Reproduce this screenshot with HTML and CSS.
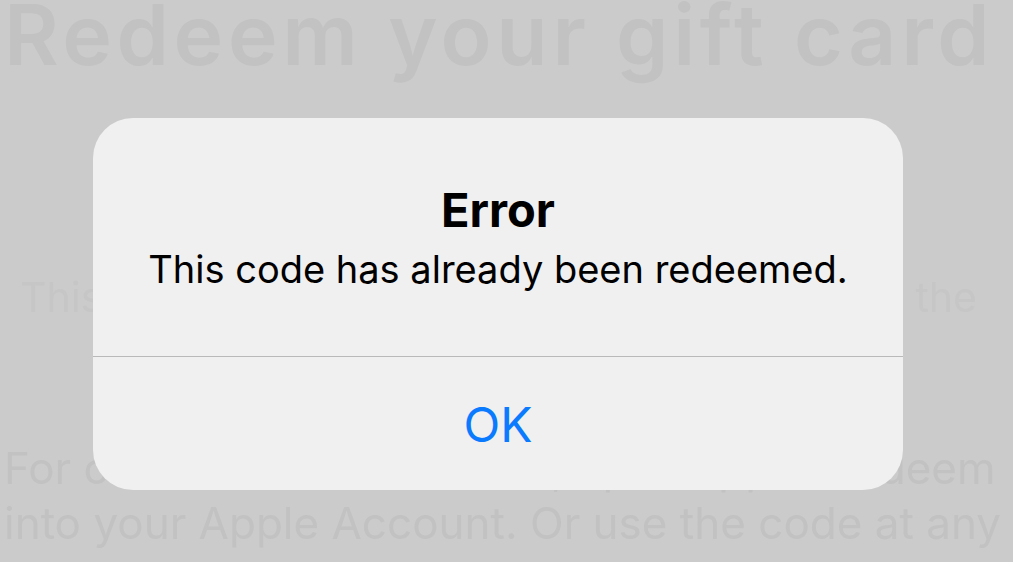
FILE: index.html
```html
<!DOCTYPE html>
<html lang="en">
<head>
<meta charset="utf-8">
<title>Error</title>
<link rel="stylesheet" href="styles.css">
</head>
<body>
<main class="screen">
  <section class="backdrop" aria-hidden="true">
    <h1 class="bg-title">Redeem your gift card</h1>
    <p class="bg-line bg-faint">This gift card can be redeemed on the</p>
    <p class="bg-text">For codes that start with X, open app to redeem<br>into your Apple Account. Or use the code at any</p>
  </section>
  <div class="alert" role="alertdialog" aria-labelledby="alert-title">
    <div class="alert-body">
      <h2 class="alert-title" id="alert-title">Error</h2>
      <p class="alert-message">This code has already been redeemed.</p>
    </div>
    <button class="alert-button" type="button">OK</button>
  </div>
</main>
</body>
</html>
```

FILE: styles.css
```css
html, body {
  margin: 0;
  padding: 0;
}

body {
  background: #cbcbcb;
  overflow: hidden;
}

.screen {
  position: relative;
  width: 1013px;
  height: 562px;
  overflow: hidden;
}

.backdrop {
  font-family: "Inter", "Roboto", sans-serif;
  color: #c2c2c2;
  filter: blur(0.6px);
  padding: 0 4px;
}

.bg-title {
  margin: -7px 0 0;
  font-size: 84px;
  line-height: 84px;
  font-weight: 600;
  letter-spacing: 4.6px;
  white-space: nowrap;
}

.bg-line {
  margin: 195px 0 0;
  padding: 0 32px 0 16px;
  font-size: 41px;
  line-height: 50px;
  white-space: nowrap;
  text-align: justify;
  text-align-last: justify;
}

.bg-faint {
  color: #c6c6c6;
}

.bg-text {
  margin: 119px 0 0;
  padding-right: 18px;
  font-size: 44px;
  line-height: 55px;
  white-space: nowrap;
  text-align: justify;
  text-align-last: justify;
}

.alert {
  position: absolute;
  left: 93px;
  top: 118px;
  width: 810px;
  height: 372px;
  background: #f0f0f0;
  border-radius: 40px;
  display: flex;
  flex-direction: column;
  font-family: "Inter", "Noto Sans", sans-serif;
  color: #000;
  text-align: center;
}

.alert-body {
  padding: 64px 30px 0;
  height: 239px;
  box-sizing: border-box;
  border-bottom: 1px solid #b9b9b9;
}

.alert-title {
  margin: 0;
  font-size: 47px;
  line-height: 56px;
  font-weight: 700;
}

.alert-message {
  margin: 8px 0 0;
  font-size: 38px;
  line-height: 46px;
  font-weight: 400;
}

.alert-button {
  flex: 1;
  border: 0;
  background: transparent;
  font-family: inherit;
  font-size: 48px;
  line-height: 56px;
  color: #0a7aff;
  padding: 2px 0 0;
  cursor: pointer;
}
```
